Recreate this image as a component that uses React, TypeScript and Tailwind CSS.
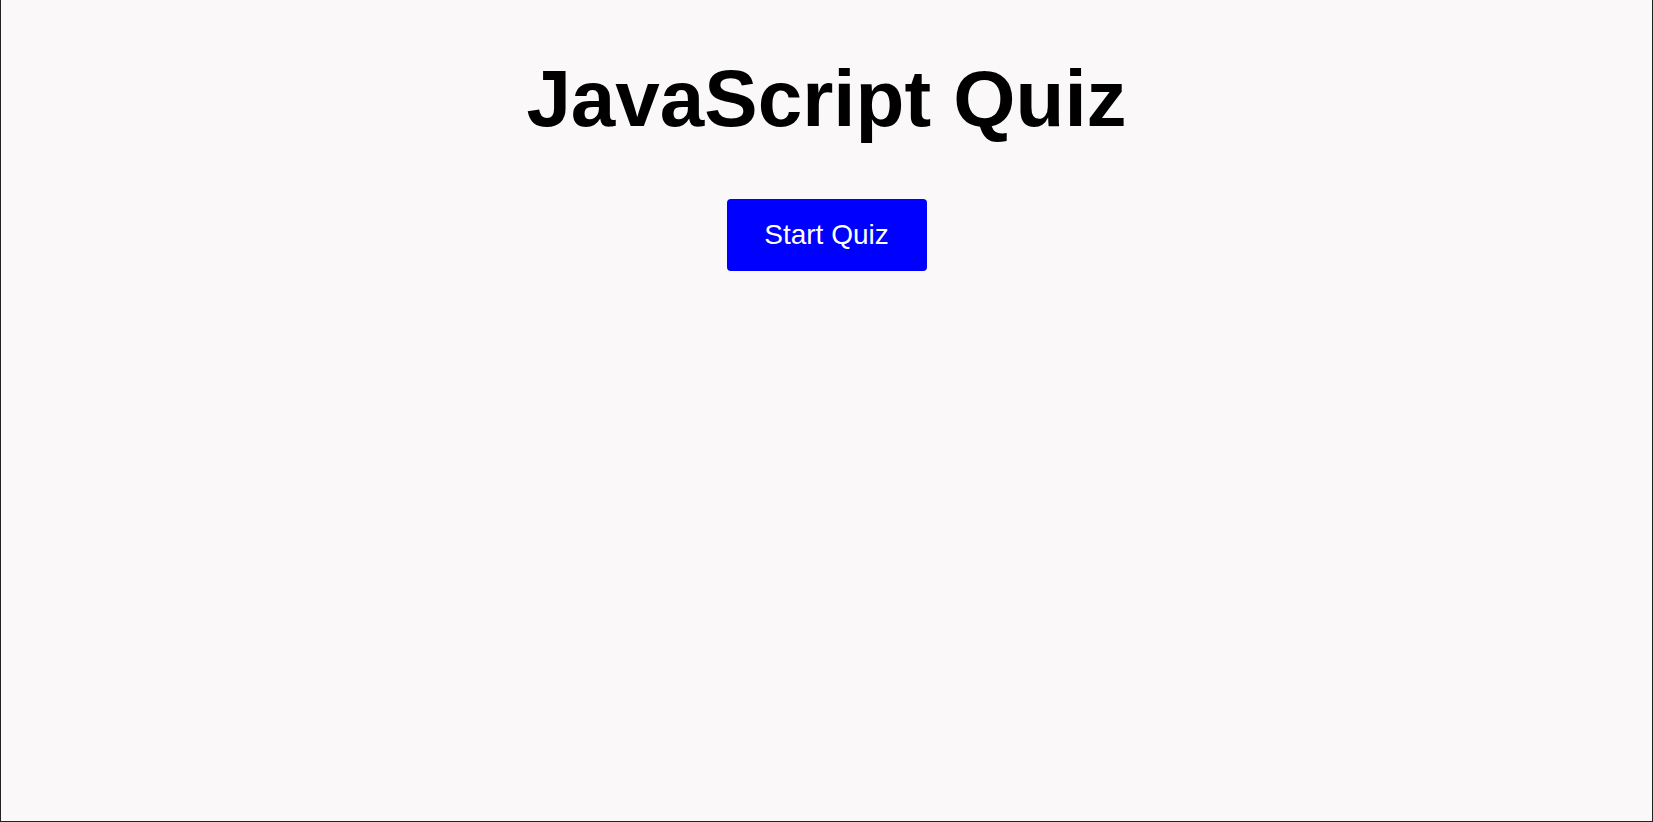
export default function App() {
  return (
    <div className="h-[822px] w-full bg-[#faf8f9] border-l border-r border-b border-[#222] flex flex-col items-center" style={{ fontFamily: '"Liberation Sans", Arial, sans-serif' }}>
      <h1 className="mt-[53px] text-[80px] font-bold leading-[1.15] text-black">JavaScript Quiz</h1>
      <button className="mt-[54px] w-[200px] h-[72px] rounded-[4px] bg-[#0000ff] text-white text-[28px]">Start Quiz</button>
    </div>
  );
}
